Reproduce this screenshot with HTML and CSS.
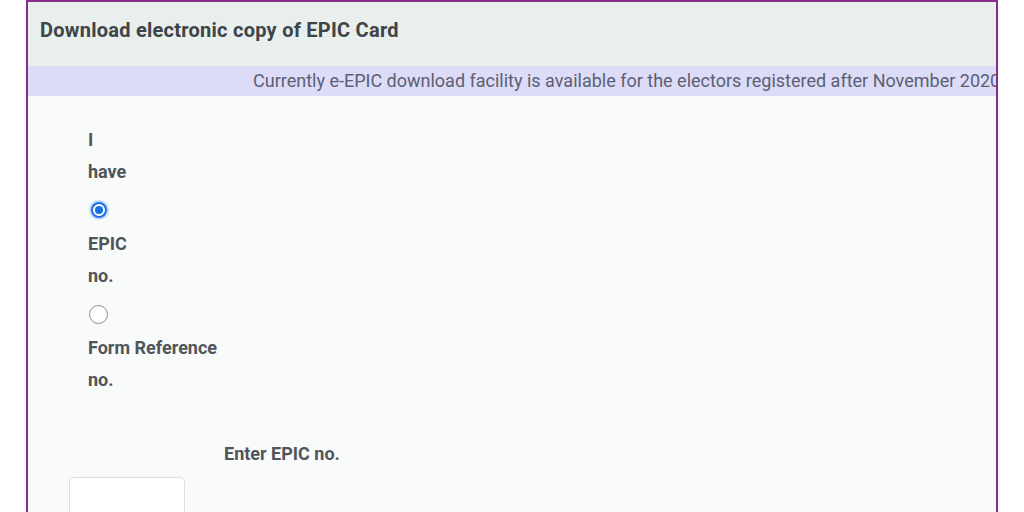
FILE: index.html
```html
<!DOCTYPE html>
<html>
<head>
<meta charset="utf-8">
<link rel="stylesheet" href="styles.css">
</head>
<body>
<div class="frame">
  <div class="header">Download electronic copy of EPIC Card</div>
  <div class="banner">Currently e-EPIC download facility is available for the electors registered after November 2020</div>
  <div class="content">
    <div class="options">
      <div class="line">I</div>
      <div class="line">have</div>
      <div class="radio-row"><span class="radio checked"><span class="dot"></span></span></div>
      <div class="line">EPIC</div>
      <div class="line">no.</div>
      <div class="radio-row"><span class="radio"></span></div>
      <div class="line">Form Reference</div>
      <div class="line">no.</div>
    </div>
    <div class="field-label">Enter EPIC no.</div>
    <div class="input-box"></div>
  </div>
</div>
</body>
</html>
```
FILE: styles.css
```css
html, body {
  margin: 0;
  padding: 0;
  background: #ffffff;
  font-family: Roboto, "Liberation Sans", Arial, sans-serif;
  height: 512px;
  overflow: hidden;
}
.frame {
  margin-left: 26px;
  width: 968px;
  height: 520px;
  border: 2px solid #8a2c8c;
  border-bottom: none;
  background: #f9fbfb;
  overflow: hidden;
}
.header {
  height: 64px;
  background: #e8efec;
  padding-left: 12px;
  font-size: 20px;
  letter-spacing: 0.25px;
  font-weight: 700;
  color: #3f4448;
  line-height: 56px;
}
.banner {
  height: 30px;
  background: #dcdcf9;
  padding-left: 225px;
  font-size: 18px;
  color: #5b6072;
  line-height: 30px;
  white-space: nowrap;
  overflow: hidden;
}
.content {
  padding-top: 28px;
}
.options {
  padding-left: 60px;
  font-size: 18px;
  font-weight: 700;
  color: #50555b;
}
.line {
  height: 32px;
  line-height: 32px;
}
.radio-row {
  box-sizing: border-box;
  height: 40px;
  padding-top: 4px;
  padding-left: 1px;
  display: flex;
  align-items: center;
}
.radio {
  box-sizing: border-box;
  width: 19px;
  height: 19px;
  border-radius: 50%;
  border: 1.5px solid #8e9194;
  background: #ffffff;
  display: flex;
  align-items: center;
  justify-content: center;
}
.radio.checked {
  width: 16px;
  height: 16px;
  margin-left: 2px;
  border: 2px solid #1a6fe6;
  box-shadow: 0 0 0 2px #c3d9f8;
}
.dot {
  width: 8px;
  height: 8px;
  border-radius: 50%;
  background: #1a6fe6;
}
.field-label {
  margin-top: 42px;
  padding-left: 196px;
  height: 32px;
  line-height: 32px;
  font-size: 18px;
  font-weight: 700;
  color: #50555b;
}
.input-box {
  margin-top: 7px;
  margin-left: 41px;
  width: 114px;
  height: 44px;
  border: 1px solid #dcdedf;
  border-radius: 4px;
  background: #ffffff;
}
```
